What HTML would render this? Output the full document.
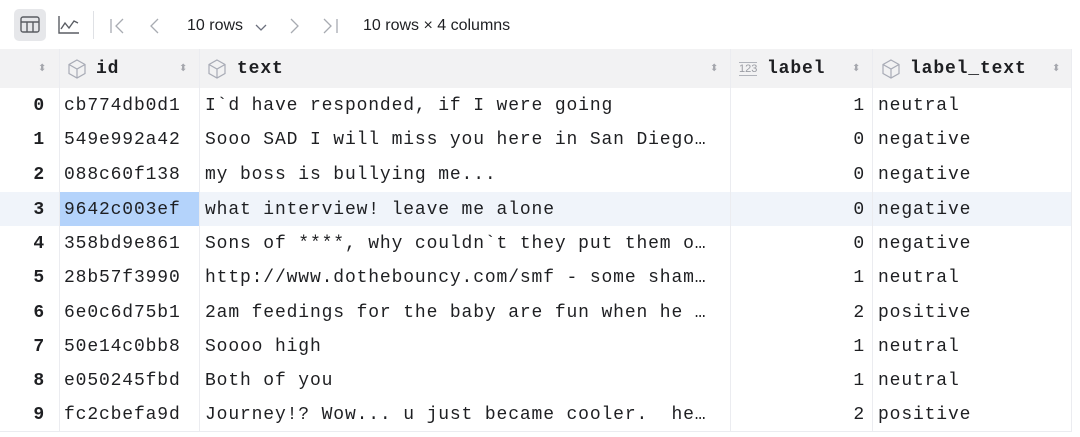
<!DOCTYPE html>
<html><head><style>
body{margin:0;width:1080px;height:437px;background:#fff;overflow:hidden;font-family:"Liberation Sans",sans-serif;position:relative}
.tb{position:absolute;top:0;left:0;height:49px;width:1080px}
.abs{position:absolute}
.mono{font-family:"Liberation Mono",monospace;font-size:18px;letter-spacing:0.86px;color:#1e1f22}
.hdr{position:absolute;top:49px;left:0;width:1072px;height:39px;background:#f2f2f3}
.vl{position:absolute;top:49px;height:383px;width:1px;background:#ebecf0}
.row{position:absolute;left:0;width:1072px;height:34px}
.cell{position:absolute;top:1px;height:34px;line-height:34px;white-space:pre;overflow:hidden}
.srt{position:absolute;color:#a5a7ad;font-size:10px;line-height:10px}
</style></head><body>
<div class="tb">
  <div class="abs" style="left:14px;top:9px;width:32px;height:32px;background:#e6e7ea;border-radius:5px"></div>
  <svg class="abs" style="left:19px;top:15px" width="22" height="20" viewBox="0 0 22 20"><rect x="2" y="2" width="18" height="15" rx="2" fill="none" stroke="#5a5d63" stroke-width="1.4"/><line x1="2" y1="7" x2="20" y2="7" stroke="#5a5d63" stroke-width="1.4"/><line x1="8" y1="7" x2="8" y2="17" stroke="#5a5d63" stroke-width="1.4"/><line x1="14" y1="7" x2="14" y2="17" stroke="#5a5d63" stroke-width="1.4"/></svg>
  <svg class="abs" style="left:57px;top:14px" width="24" height="22" viewBox="0 0 24 22"><path d="M2 2V19H22" fill="none" stroke="#5a5d63" stroke-width="1.4"/><path d="M4 15L8 9L12 14L17 7L21 9" fill="none" stroke="#5a5d63" stroke-width="1.4"/></svg>
  <div class="abs" style="left:93px;top:11px;width:1px;height:28px;background:#dfe1e5"></div>
  <svg class="abs" style="left:109px;top:17px" width="60" height="18" viewBox="0 0 60 18"><path d="M2 2V16M14 2L7 9L14 16" fill="none" stroke="#a8abb2" stroke-width="1.3"/><path d="M49 2L42 9L49 16" fill="none" stroke="#a8abb2" stroke-width="1.3"/></svg>
  <div class="abs" style="left:187px;top:17px;font-size:16px;color:#1e1f22">10 rows</div>
  <svg class="abs" style="left:254px;top:22px" width="14" height="10"><path d="M2 3L7 8L12 3" fill="none" stroke="#6c707e" stroke-width="1.3"/></svg>
  <svg class="abs" style="left:287px;top:17px" width="60" height="18" viewBox="0 0 60 18"><path d="M4 2L11 9L4 16" fill="none" stroke="#a8abb2" stroke-width="1.3"/><path d="M37 2L44 9L37 16M50 2V16" fill="none" stroke="#a8abb2" stroke-width="1.3"/></svg>
  <div class="abs" style="left:363px;top:17px;font-size:16px;color:#1e1f22">10 rows × 4 columns</div>
</div>
<div class="hdr">
  <div class="srt" style="left:38px;top:15px">⬍</div>
  <svg class="abs" style="left:66px;top:9px" width="22" height="22" viewBox="0 0 22 22"><path d="M11 2L19 6.5V15.5L11 20L3 15.5V6.5Z M3 6.5L11 11L19 6.5 M11 11V20" fill="none" stroke="#a8abb6" stroke-width="1.2"/></svg>
  <div class="abs mono" style="left:96px;top:10px;font-weight:bold">id</div>
  <div class="srt" style="left:179px;top:15px">⬍</div>
  <svg class="abs" style="left:206px;top:9px" width="22" height="22" viewBox="0 0 22 22"><path d="M11 2L19 6.5V15.5L11 20L3 15.5V6.5Z M3 6.5L11 11L19 6.5 M11 11V20" fill="none" stroke="#a8abb6" stroke-width="1.2"/></svg>
  <div class="abs mono" style="left:237px;top:10px;font-weight:bold">text</div>
  <div class="srt" style="left:710px;top:15px">⬍</div>
  <div class="abs" style="left:739px;top:13px;font-size:11px;color:#9a9ca3;border-top:1px solid #b0b3ba;border-bottom:1px solid #b0b3ba;line-height:12px">123</div>
  <div class="abs mono" style="left:767px;top:10px;font-weight:bold">label</div>
  <div class="srt" style="left:852px;top:15px">⬍</div>
  <svg class="abs" style="left:880px;top:9px" width="22" height="22" viewBox="0 0 22 22"><path d="M11 2L19 6.5V15.5L11 20L3 15.5V6.5Z M3 6.5L11 11L19 6.5 M11 11V20" fill="none" stroke="#a8abb6" stroke-width="1.2"/></svg>
  <div class="abs mono" style="left:910px;top:10px;font-weight:bold">label_text</div>
  <div class="srt" style="left:1052px;top:15px">⬍</div>
</div>
<div class="abs" style="left:0;top:192px;width:1072px;height:34px;background:#f0f4fa"></div>
<div class="abs" style="left:60px;top:192px;width:139px;height:34px;background:#b4d3fb"></div>
<div class="vl" style="left:59px"></div><div class="vl" style="left:199px"></div><div class="vl" style="left:730px"></div><div class="vl" style="left:872px"></div><div class="vl" style="left:1071px"></div>
<div class="abs" style="left:0;top:431px;width:1072px;height:1px;background:#ebecf0"></div>
<div class="mono">
<div class="row" style="top:88px"><div class="cell" style="right:1027px;font-weight:bold">0</div><div class="cell" style="left:64px">cb774db0d1</div><div class="cell" style="left:205px">I`d have responded, if I were going</div><div class="cell" style="right:207px">1</div><div class="cell" style="left:878px">neutral</div></div>
<div class="row" style="top:122px"><div class="cell" style="right:1027px;font-weight:bold">1</div><div class="cell" style="left:64px">549e992a42</div><div class="cell" style="left:205px">Sooo SAD I will miss you here in San Diego…</div><div class="cell" style="right:207px">0</div><div class="cell" style="left:878px">negative</div></div>
<div class="row" style="top:157px"><div class="cell" style="right:1027px;font-weight:bold">2</div><div class="cell" style="left:64px">088c60f138</div><div class="cell" style="left:205px">my boss is bullying me...</div><div class="cell" style="right:207px">0</div><div class="cell" style="left:878px">negative</div></div>
<div class="row" style="top:192px"><div class="cell" style="right:1027px;font-weight:bold">3</div><div class="cell" style="left:64px">9642c003ef</div><div class="cell" style="left:205px">what interview! leave me alone</div><div class="cell" style="right:207px">0</div><div class="cell" style="left:878px">negative</div></div>
<div class="row" style="top:226px"><div class="cell" style="right:1027px;font-weight:bold">4</div><div class="cell" style="left:64px">358bd9e861</div><div class="cell" style="left:205px">Sons of ****, why couldn`t they put them o…</div><div class="cell" style="right:207px">0</div><div class="cell" style="left:878px">negative</div></div>
<div class="row" style="top:260px"><div class="cell" style="right:1027px;font-weight:bold">5</div><div class="cell" style="left:64px">28b57f3990</div><div class="cell" style="left:205px">http://www.dothebouncy.com/smf - some sham…</div><div class="cell" style="right:207px">1</div><div class="cell" style="left:878px">neutral</div></div>
<div class="row" style="top:295px"><div class="cell" style="right:1027px;font-weight:bold">6</div><div class="cell" style="left:64px">6e0c6d75b1</div><div class="cell" style="left:205px">2am feedings for the baby are fun when he …</div><div class="cell" style="right:207px">2</div><div class="cell" style="left:878px">positive</div></div>
<div class="row" style="top:329px"><div class="cell" style="right:1027px;font-weight:bold">7</div><div class="cell" style="left:64px">50e14c0bb8</div><div class="cell" style="left:205px">Soooo high</div><div class="cell" style="right:207px">1</div><div class="cell" style="left:878px">neutral</div></div>
<div class="row" style="top:363px"><div class="cell" style="right:1027px;font-weight:bold">8</div><div class="cell" style="left:64px">e050245fbd</div><div class="cell" style="left:205px">Both of you</div><div class="cell" style="right:207px">1</div><div class="cell" style="left:878px">neutral</div></div>
<div class="row" style="top:397px"><div class="cell" style="right:1027px;font-weight:bold">9</div><div class="cell" style="left:64px">fc2cbefa9d</div><div class="cell" style="left:205px">Journey!? Wow... u just became cooler.  he…</div><div class="cell" style="right:207px">2</div><div class="cell" style="left:878px">positive</div></div>
</div>
</body></html>
